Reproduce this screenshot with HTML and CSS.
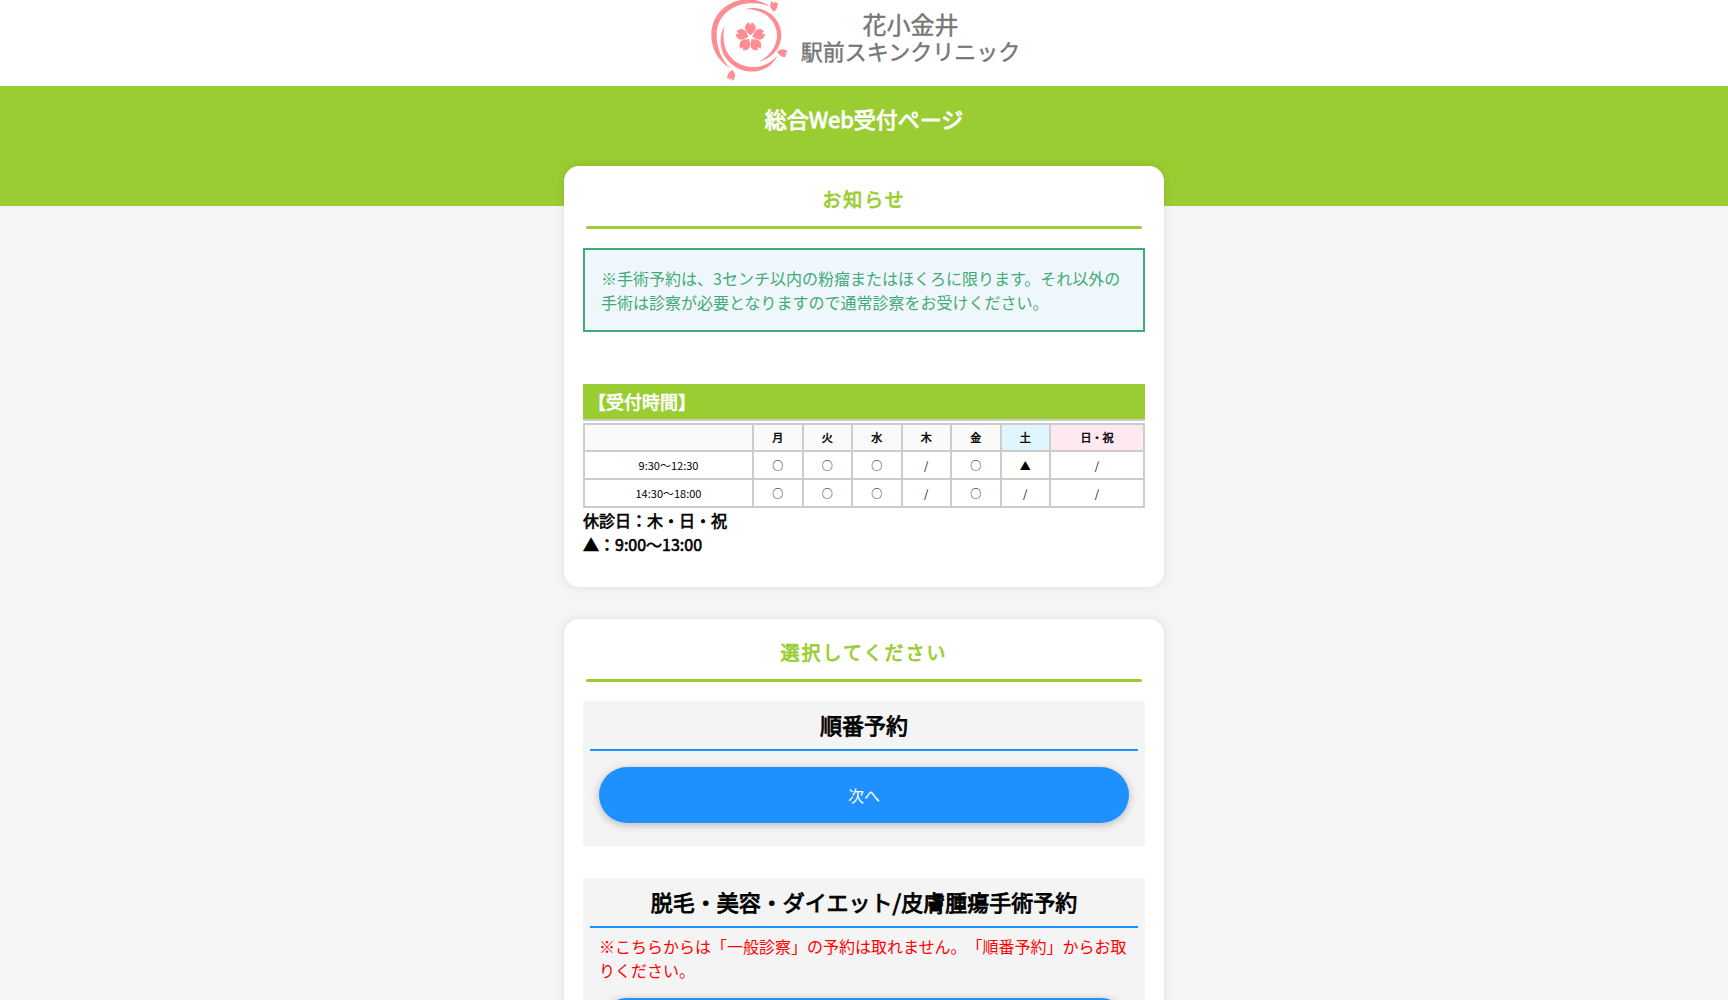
FILE: index.html
```html
<!DOCTYPE html>
<html lang="ja">
<head>
  <meta charset="UTF-8">
  <meta name="viewport" content="width=device-width, initial-scale=1.0">
  <title>総合Web受付ページ</title>
  <link rel="stylesheet" href="styles.css">
</head>
<body>
  <header class="logo">
    <svg class="logo-mark" viewBox="30 0 234 246" aria-hidden="true">
      <defs>
        <path id="petal" d="M0,-6 C-7,-13 -17,-19 -16,-30 C-15,-37 -10,-42 -5,-45 L0,-36 L4,-45 C10,-42 16,-36 16,-30 C17,-19 7,-13 0,-6Z"/>
        <path id="bud" d="M0,17 C-8,11 -12,5 -11,-2 C-11,-8 -9,-12 -6,-15 L-1,-7 L4,-14 L6,-8 L11,-11 C13,-2 10,9 0,17Z"/>
      </defs>
      <!-- rings -->
      <path d="M92,206 C50,180 33,142 34,102 C36,40 85,0 140,-2 C168,-2 192,5 209,20 C190,11 170,8 150,10 C95,12 50,50 50,105 C50,145 65,180 92,206Z"/>
      <path d="M134,28 C190,12 243,50 244,105 C244,140 222,172 178,185 C212,165 231,138 231,105 C229,60 190,25 134,28Z"/>
      <path d="M74,78 C54,110 58,158 90,188 C135,230 205,222 232,168 C200,204 150,211 112,188 C76,165 63,125 74,78Z"/>
      <!-- flower -->
      <g transform="translate(151 112)">
        <use href="#petal"/>
        <use href="#petal" transform="rotate(72)"/>
        <use href="#petal" transform="rotate(144)"/>
        <use href="#petal" transform="rotate(216)"/>
        <use href="#petal" transform="rotate(288)"/>
      </g>
      <use href="#bud" transform="translate(222 18)"/>
      <use href="#bud" transform="translate(248 159) rotate(100)"/>
      <use href="#bud" transform="translate(94 227) rotate(190)"/>
    </svg>
    <p class="logo-name"><span class="place">花小金井</span><br>駅前スキンクリニック</p>
  </header>

  <div class="hero">
    <h1>総合Web受付ページ</h1>
  </div>

  <main>
    <section class="card">
      <h2 class="card-title">お知らせ</h2>
      <p class="notice">※手術予約は、3センチ以内の粉瘤またはほくろに限ります。それ以外の手術は診察が必要となりますので通常診察をお受けください。</p>

      <h3 class="hours-title">【受付時間】</h3>
      <table class="hours">
        <thead>
          <tr>
            <th class="time"></th>
            <th>月</th>
            <th>火</th>
            <th>水</th>
            <th>木</th>
            <th>金</th>
            <th class="sat">土</th>
            <th class="sun">日・祝</th>
          </tr>
        </thead>
        <tbody>
          <tr>
            <td>9:30～12:30</td>
            <td>○</td>
            <td>○</td>
            <td>○</td>
            <td>/</td>
            <td>○</td>
            <td>▲</td>
            <td>/</td>
          </tr>
          <tr>
            <td>14:30～18:00</td>
            <td>○</td>
            <td>○</td>
            <td>○</td>
            <td>/</td>
            <td>○</td>
            <td>/</td>
            <td>/</td>
          </tr>
        </tbody>
      </table>
      <p class="closed">休診日：木・日・祝<br>▲：9:00～13:00</p>
    </section>

    <section class="card">
      <h2 class="card-title">選択してください</h2>

      <div class="menu">
        <h3>順番予約</h3>
        <button type="button">次へ</button>
      </div>

      <div class="menu">
        <h3>脱毛・美容・ダイエット/皮膚腫瘍手術予約</h3>
        <p class="caution">※こちらからは「一般診察」の予約は取れません。「順番予約」からお取りください。</p>
        <button type="button">次へ</button>
      </div>
    </section>
  </main>
</body>
</html>
```

FILE: styles.css
```css
* { margin: 0; padding: 0; box-sizing: border-box; }
body { font-family: "Noto Sans CJK JP", sans-serif; font-size: 16px; line-height: 24px; color: #000; background: #f5f5f5; text-spacing-trim: space-all; }
h1, h2, h3, th, .closed { font-weight: normal; -webkit-text-stroke: 0.04em currentColor; }

.logo { display: flex; justify-content: center; gap: 13px; height: 86px; padding-left: 2px; background: #fff; }
.logo-mark { width: 78px; height: 82px; fill: #ff8c91; }
.logo-name { padding-top: 11px; font-size: 22px; line-height: 26px; color: #777; text-align: center; -webkit-text-stroke: 0.02em currentColor; }
.logo-name .place { font-size: 24px; }

.hero { height: 120px; padding-top: 14px; background: yellowgreen; color: #fff; text-align: center; }
.hero h1 { font-size: 22px; line-height: 36px; }

main { max-width: 600px; margin: -40px auto 0; }
.card { margin-bottom: 32px; padding: 15px 19px 31px; background: #fff; border-radius: 15px; box-shadow: 0 0 10px rgba(0,0,0,0.1); }
.card-title { position: relative; margin-bottom: 19px; padding-bottom: 12px; font-size: 19px; line-height: 36px; letter-spacing: 2px; color: yellowgreen; text-align: center; }
.card-title::after { content: ""; position: absolute; left: 3px; right: 3px; bottom: 0; height: 3px; border-radius: 2px; background: yellowgreen; }

.notice { margin-bottom: 52px; padding: 16px; border: 2px solid #42ab75; background: #eff6fc; color: #42ab75; }

.hours-title { margin-bottom: 2px; padding: 4px 5px; border-bottom: 2px solid #ccc; background: yellowgreen; color: #fff; font-size: 18px; line-height: 27px; }
.hours { width: 100%; border-collapse: collapse; table-layout: fixed; font-size: 11px; line-height: 17px; text-align: center; }
.hours th, .hours td { padding: 4px; border: 2px solid #ccc; }
.hours td { line-height: 18px; }
.hours th { background: #fafafa; }
.hours .time { width: 169px; }
.hours .sun { width: 94px; background: #ffe9f0; }
.hours .sat { background: #e1f5ff; }

.menu { margin-bottom: 32px; padding: 0 16px 23px; background: #f4f4f4; }
.menu h3 { margin: 0 -9px; padding: 7px 0 9px; border-bottom: 2px solid dodgerblue; font-size: 22px; line-height: 32px; text-align: center; }
.menu button { display: block; width: 100%; height: 56px; margin-top: 16px; border: none; border-radius: 28px; background: dodgerblue; color: #fff; font-family: inherit; font-size: 16px; box-shadow: 0 2px 8px rgba(0,0,0,0.25); cursor: pointer; }
.caution { padding-top: 6px; color: red; }
```
